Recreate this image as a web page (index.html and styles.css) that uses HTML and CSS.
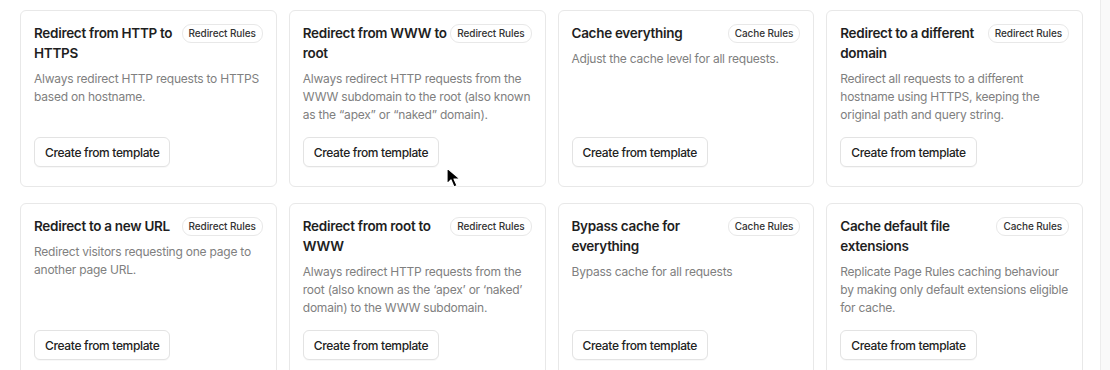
FILE: index.html
```html
<!DOCTYPE html>
<html lang="en">
<head>
    <meta charset="UTF-8">
    <meta name="viewport" content="width=device-width, initial-scale=1.0">
    <title>Rule templates</title>
    <link rel="stylesheet" href="styles.css">
</head>
<body>
    <div class="page">
        <main class="content">
            <div class="templates">
                <div class="card">
                    <div class="card-head">
                        <h3 class="card-title">Redirect from HTTP to HTTPS</h3>
                        <span class="badge">Redirect Rules</span>
                    </div>
                    <p class="card-desc">Always redirect HTTP requests to HTTPS based on hostname.</p>
                    <button class="btn">Create from template</button>
                </div>
                <div class="card">
                    <div class="card-head">
                        <h3 class="card-title">Redirect from WWW to root</h3>
                        <span class="badge">Redirect Rules</span>
                    </div>
                    <p class="card-desc">Always redirect HTTP requests from the WWW subdomain to the root (also known as the “apex” or “naked” domain).</p>
                    <button class="btn">Create from template</button>
                    <!-- mouse pointer from the capture -->
                    <svg class="pointer" width="16" height="22" viewBox="0 0 16 22">
                        <path d="M1 1 L1 17 L5 13 L8 20 L11 18.6 L8 12 L14 12 Z" fill="#000" stroke="#fff" stroke-width="1.2" stroke-linejoin="round"/>
                    </svg>
                </div>
                <div class="card">
                    <div class="card-head">
                        <h3 class="card-title">Cache everything</h3>
                        <span class="badge">Cache Rules</span>
                    </div>
                    <p class="card-desc">Adjust the cache level for all requests.</p>
                    <button class="btn">Create from template</button>
                </div>
                <div class="card">
                    <div class="card-head">
                        <h3 class="card-title">Redirect to a different domain</h3>
                        <span class="badge">Redirect Rules</span>
                    </div>
                    <p class="card-desc">Redirect all requests to a different hostname using HTTPS, keeping the original path and query string.</p>
                    <button class="btn">Create from template</button>
                </div>

                <div class="card">
                    <div class="card-head">
                        <h3 class="card-title">Redirect to a new URL</h3>
                        <span class="badge">Redirect Rules</span>
                    </div>
                    <p class="card-desc">Redirect visitors requesting one page to another page URL.</p>
                    <button class="btn">Create from template</button>
                </div>
                <div class="card">
                    <div class="card-head">
                        <h3 class="card-title">Redirect from root to WWW</h3>
                        <span class="badge">Redirect Rules</span>
                    </div>
                    <p class="card-desc">Always redirect HTTP requests from the root (also known as the ‘apex’ or ‘naked’ domain) to the WWW subdomain.</p>
                    <button class="btn">Create from template</button>
                </div>
                <div class="card">
                    <div class="card-head">
                        <h3 class="card-title">Bypass cache for everything</h3>
                        <span class="badge">Cache Rules</span>
                    </div>
                    <p class="card-desc">Bypass cache for all requests</p>
                    <button class="btn">Create from template</button>
                </div>
                <div class="card">
                    <div class="card-head">
                        <h3 class="card-title">Cache default file extensions</h3>
                        <span class="badge">Cache Rules</span>
                    </div>
                    <p class="card-desc">Replicate Page Rules caching behaviour by making only default extensions eligible for cache.</p>
                    <button class="btn">Create from template</button>
                </div>
            </div>
        </main>
        <aside class="side"></aside>
    </div>
</body>
</html>
```

FILE: styles.css
```css
body {
    margin: 0;
    font-family: 'Inter', 'Liberation Sans', sans-serif;
    background-color: #ffffff;
    color: #1f1f1f;
}
.page {
    display: flex;
    min-height: 370px;
}
.content {
    width: 1101px;
    padding: 10px 17px 0 20px;
    box-sizing: border-box;
    border-right: 1px solid #ececec;
}
.side {
    flex: 1;
    background-color: #f9f9f9;
}
.templates {
    display: grid;
    grid-template-columns: repeat(4, 1fr);
    column-gap: 12px;
    row-gap: 16px;
}
.card {
    position: relative;
    display: flex;
    flex-direction: column;
    border: 1px solid #e8e8e8;
    border-radius: 6px;
    padding: 12px 13px 19px 13px;
    background-color: #ffffff;
}
.card-head {
    display: flex;
    justify-content: space-between;
    align-items: flex-start;
    gap: 3px;
}
.card-title {
    margin: 0;
    font-size: 13.5px;
    line-height: 20px;
    font-weight: 600;
    letter-spacing: -0.3px;
    color: #1f1f1f;
}
.badge {
    flex-shrink: 0;
    margin-top: 1px;
    padding: 0 6px;
    height: 17px;
    line-height: 17px;
    font-size: 10px;
    font-weight: 500;
    letter-spacing: -0.1px;
    color: #333333;
    border: 1px solid #e8e8e8;
    border-radius: 9px;
    white-space: nowrap;
}
.card-desc {
    margin: 7px 0 13px 0;
    font-size: 12px;
    line-height: 18px;
    letter-spacing: -0.22px;
    color: #808080;
}
.btn {
    margin-top: auto;
    align-self: flex-start;
    height: 30px;
    padding: 0 10px;
    font-family: inherit;
    font-size: 12px;
    font-weight: 500;
    letter-spacing: -0.35px;
    color: #222222;
    background-color: #ffffff;
    border: 1px solid #e3e3e3;
    border-radius: 6px;
    box-shadow: 0 1px 1px rgba(0, 0, 0, 0.03);
    cursor: pointer;
}
.pointer {
    position: absolute;
    left: 156px;
    top: 156px;
}
```
